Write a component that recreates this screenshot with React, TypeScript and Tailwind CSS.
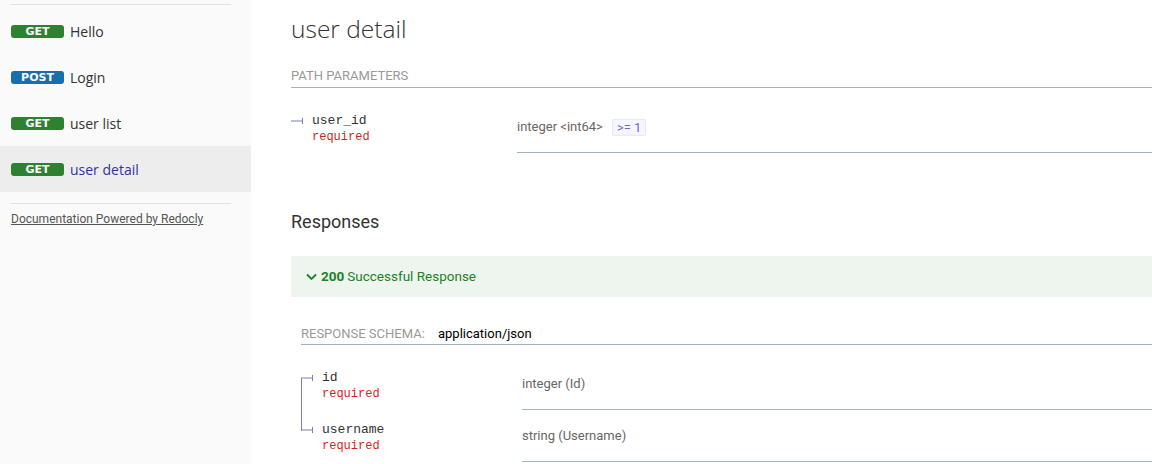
import React from "react";

const sans = "font-['Roboto',sans-serif]";
const heading = "font-['Open_Sans',sans-serif]";
const mono = "font-['Courier_New','Liberation_Mono',monospace]";

type Item = { method: "GET" | "POST"; label: string; active?: boolean };

const items: Item[] = [
  { method: "GET", label: "Hello" },
  { method: "POST", label: "Login" },
  { method: "GET", label: "user list" },
  { method: "GET", label: "user detail", active: true },
];

const Badge: React.FC<{ method: Item["method"] }> = ({ method }) => (
  <span
    className={`inline-block w-[53px] h-[13px] rounded-[3px] text-center text-white font-bold text-[11px] leading-[13px] font-['DejaVu_Sans',sans-serif] ${
      method === "GET" ? "bg-[#2f8132]" : "bg-[#186faf]"
    }`}
  >
    {method}
  </span>
);

const Sidebar: React.FC = () => (
  <aside className="w-[251px] shrink-0 bg-[#fafafa] h-[464px] pt-[4px]">
    <div className="mx-[11px] w-[220px] border-t border-[#e1e1e1]" />
    <ul className="mt-[3px]">
      {items.map((it) => (
        <li
          key={it.label}
          className={`h-[46px] flex items-center px-[11px] gap-[6px] ${
            it.active ? "bg-[#ededed]" : ""
          }`}
        >
          <Badge method={it.method} />
          <span
            className={`${heading} text-[14px] ${
              it.active ? "text-[#32329f]" : "text-[#333]"
            }`}
          >
            {it.label}
          </span>
        </li>
      ))}
    </ul>
    <div className="mx-[11px] w-[220px] mt-[11px] border-t border-[#e1e1e1] pt-[1px]">
      <a className={`${sans} text-[12px] text-[#555] underline leading-[20px]`}>
        Documentation Powered by Redocly
      </a>
    </div>
  </aside>
);

// horizontal branch with a small end tick, drawn like redoc's tree lines
const Branch: React.FC = () => (
  <svg width="12" height="8" viewBox="0 0 12 8" className="shrink-0">
    <line x1="0" y1="4" x2="11" y2="4" stroke="#7c7cbb" strokeWidth="1" />
    <line x1="11.5" y1="1" x2="11.5" y2="7" stroke="#7c7cbb" strokeWidth="1" />
  </svg>
);

const Field: React.FC<{
  name: string;
  type: React.ReactNode;
  nameWidth: string;
  line?: "first" | "last" | "only";
}> = ({ name, type, nameWidth, line = "only" }) => (
  <div className="flex">
    <div className={`${nameWidth} shrink-0 relative pt-[13px]`}>
      {line === "first" && (
        <div className="absolute left-0 top-[20px] bottom-0 border-l border-[#7c7cbb]" />
      )}
      {line === "last" && (
        <div className="absolute left-0 top-0 h-[21px] border-l border-[#7c7cbb]" />
      )}
      <div className="flex items-center h-[14px]">
        <Branch />
        <span className={`${mono} text-[13px] text-[#333] ml-[9px]`}>{name}</span>
      </div>
      <div className={`${mono} text-[12px] text-[#d41f1c] ml-[21px] leading-[18px]`}>
        required
      </div>
    </div>
    <div className="flex-1 h-[52px] flex items-center border-b border-[#9fb4be] pt-[1px]">
      {type}
    </div>
  </div>
);

export default function App() {
  return (
    <div className="flex w-[1152px] h-[464px] overflow-hidden bg-white">
      <Sidebar />
      <main className="flex-1 pl-[40px] pt-[14px]">
        <h2 className={`${heading} font-light text-[24.5px] text-[#333] leading-[30px]`}>
          user detail
        </h2>

        <div className={`${sans} mt-[23px] text-[13px] uppercase text-[#999] border-b border-[#9fb4be] pb-[3px] leading-[17px]`}>
          Path Parameters
        </div>

        <div className="mt-[13px]">
          <Field
            name="user_id"
            nameWidth="w-[226px]"
            type={
              <span className={`${sans} text-[13px] text-[#666] flex items-center`}>
                integer &lt;int64&gt;
                <span className="ml-[9px] px-[4px] h-[17px] leading-[16px] text-[13px] rounded-[2px] border border-[#e8e8f6] bg-[#f6f6ff] text-[#6b6bc6]">
                  &gt;= 1
                </span>
              </span>
            }
          />
        </div>

        <h3 className={`${sans} text-[18px] text-[#333] mt-[57px] leading-[24px]`}>Responses</h3>

        <div className="mt-[22px] h-[41px] bg-[#eef5ef] flex items-center pl-[15px] text-[#1d8127]">
          <svg width="11" height="8" viewBox="0 0 11 8" className="mr-[4px]">
            <path d="M1 1.5l4.5 4.5 4.5-4.5" fill="none" stroke="#1d8127" strokeWidth="1.8" />
          </svg>
          <span className={`${sans} text-[13.5px] font-bold`}>200</span>
          <span className={`${sans} text-[13.5px] ml-[3px]`}>Successful Response</span>
        </div>

        <div className="ml-[10px]">
          <div className={`${sans} mt-[28px] flex items-baseline border-b border-[#9fb4be] pb-[2px] leading-[17px]`}>
            <span className="text-[13px] uppercase text-[#999] w-[137px]">Response Schema:</span>
            <span className="text-[13px] text-black">application/json</span>
          </div>

          <div className="mt-[13px]">
            <Field
              name="id"
              nameWidth="w-[221px]"
              line="first"
              type={<span className={`${sans} text-[13px] text-[#666]`}>integer (Id)</span>}
            />
            <Field
              name="username"
              nameWidth="w-[221px]"
              line="last"
              type={<span className={`${sans} text-[13px] text-[#666]`}>string (Username)</span>}
            />
          </div>
        </div>
      </main>
    </div>
  );
}
